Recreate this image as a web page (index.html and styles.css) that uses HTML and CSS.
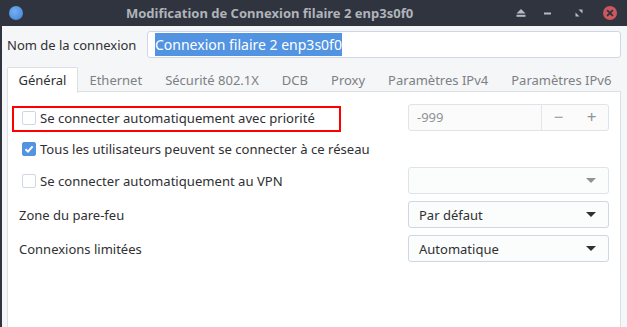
FILE: index.html
```html
<!DOCTYPE html>
<html lang="fr">
<head>
    <meta charset="UTF-8">
    <title>Modification de Connexion filaire 2 enp3s0f0</title>
    <link rel="stylesheet" href="styles.css">
</head>
<body>
    <div class="titlebar">
        <span class="app-icon"></span>
        <div class="title">Modification de Connexion filaire 2 enp3s0f0</div>
        <div class="wm-buttons">
            <svg class="wm-btn" width="10" height="8" viewBox="0 0 10 8"><path d="M5 0 L9.5 4.5 H0.5 Z" fill="#b6bac1"/><rect x="0.5" y="5.8" width="9" height="2" fill="#b6bac1"/></svg>
            <svg class="wm-btn" width="8" height="3" viewBox="0 0 8 3"><rect x="0" y="0.5" width="7" height="2" fill="#b6bac1"/></svg>
            <svg class="wm-btn" width="8" height="8" viewBox="0 0 8 8"><path d="M3.5 0.5 H7.5 V4.5 Z" fill="#b6bac1"/><path d="M0.5 3.5 V7.5 H4.5 Z" fill="#b6bac1"/></svg>
            <svg class="wm-close" width="14" height="14" viewBox="0 0 14 14"><circle cx="7" cy="7" r="7" fill="#cc575d"/><path d="M4.6 4.6 L9.4 9.4 M9.4 4.6 L4.6 9.4" stroke="#2f343f" stroke-width="1.8" stroke-linecap="round"/></svg>
        </div>
    </div>

    <div class="window">
        <div class="name-row">
            <label class="name-label">Nom de la connexion</label>
            <div class="name-input"><span class="selected">Connexion filaire 2 enp3s0f0</span></div>
        </div>

        <div class="tabs">
            <div class="tab active">Général</div>
            <div class="tab">Ethernet</div>
            <div class="tab">Sécurité 802.1X</div>
            <div class="tab">DCB</div>
            <div class="tab">Proxy</div>
            <div class="tab">Paramètres IPv4</div>
            <div class="tab">Paramètres IPv6</div>
        </div>

        <div class="panel">
            <div class="check marked"><span class="box"></span>Se connecter automatiquement avec priorité</div>
            <div class="spin">
                <span class="spin-value">-999</span>
                <span class="spin-btn">&minus;</span>
                <span class="spin-btn">+</span>
            </div>

            <div class="check"><span class="box checked"><svg width="10" height="10" viewBox="0 0 10 10"><path d="M1.5 5.2 L4 7.6 L8.6 2.4" fill="none" stroke="#fff" stroke-width="2"/></svg></span>Tous les utilisateurs peuvent se connecter à ce réseau</div>
            <div></div>

            <div class="check"><span class="box"></span>Se connecter automatiquement au VPN</div>
            <div class="combo disabled"><span></span><span class="arrow"></span></div>

            <div class="label">Zone du pare-feu</div>
            <div class="combo"><span>Par défaut</span><span class="arrow"></span></div>

            <div class="label">Connexions limitées</div>
            <div class="combo"><span>Automatique</span><span class="arrow"></span></div>
        </div>
    </div>
</body>
</html>
```

FILE: styles.css
```css
body {
    margin: 0;
    width: 627px;
    height: 327px;
    overflow: hidden;
    font-family: "Noto Sans", sans-serif;
    font-size: 13px;
    color: #2f3033;
    background-color: #f5f6f7;
}

.titlebar {
    display: flex;
    align-items: center;
    height: 26px;
    background-color: #2f343f;
    padding: 0 10px 0 9px;
}

.app-icon {
    width: 14px;
    height: 14px;
    border-radius: 50%;
    background: radial-gradient(circle at 40% 40%, #78aef0 0, #5294e2 60%, #3f7fd0 100%);
}

.title {
    flex: 1;
    text-align: center;
    font-weight: bold;
    color: #afb3ba;
    font-size: 13px;
    padding-bottom: 1px;
}

.wm-buttons {
    display: flex;
    align-items: center;
}

.wm-btn {
    margin-right: 18px;
}

.wm-btn:nth-child(2) {
    margin-right: 23px;
}

.wm-btn:nth-child(3) {
    margin-right: 20px;
}

/* main window area */
.window {
    height: 301px;
    box-sizing: border-box;
    border-left: 2px solid #2f343f;
    padding: 5px 6px 0 5px;
    display: flex;
    flex-direction: column;
}

.name-row {
    display: flex;
    align-items: center;
    height: 27px;
    flex-shrink: 0;
}

.name-label {
    width: 140px;
}

.name-input {
    flex: 1;
    height: 25px;
    line-height: 25px;
    background-color: #fff;
    border: 1px solid #cfd6e6;
    border-radius: 3px;
    padding-left: 7px;
    font-size: 14px;
}

.selected {
    background-color: #5294e2;
    color: #fff;
    padding: 2px 0;
}

.tabs {
    display: flex;
    margin-top: 9px;
    height: 24px;
    flex-shrink: 0;
    position: relative;
    z-index: 1;
}

.tab {
    padding: 0 10.5px;
    line-height: 24px;
    white-space: nowrap;
    color: #7d8085;
    border: 1px solid transparent;
    border-bottom: none;
}

.tab.active {
    color: #2f3033;
    background-color: #fff;
    border-color: #dcdfe3;
    border-radius: 2px 2px 0 0;
    height: 25px;
}

.panel {
    flex: 1;
    background-color: #fff;
    border: 1px solid #dcdfe3;
    border-bottom: none;
    padding: 12px 11px 0 11px;
    display: grid;
    grid-template-columns: 1fr 201px;
    grid-template-rows: 27px 22px 27px 27px 27px;
    row-gap: 7px;
    align-content: start;
    align-items: center;
}

.check {
    display: flex;
    align-items: center;
    font-size: 13.1px;
}

.box {
    width: 12px;
    height: 12px;
    margin: 0 4px 0 3px;
    border: 1px solid #cfd6e6;
    border-radius: 2px;
    background-color: #fff;
    display: flex;
    align-items: center;
    justify-content: center;
}

.box.checked {
    background-color: #5294e2;
    border-color: #5294e2;
}

/* red annotation frame */
.marked {
    position: relative;
}

.marked::after {
    content: "";
    position: absolute;
    left: -7px;
    top: -3px;
    width: 325px;
    height: 22px;
    border: 2px solid #f00;
}

.spin {
    display: flex;
    height: 25px;
    border: 1px solid #dfe3ea;
    border-radius: 3px;
    background-color: #fbfbfc;
}

.spin-value {
    flex: 1;
    line-height: 25px;
    padding-left: 8px;
    color: #8f9297;
    border-right: 1px solid #e2e5ea;
}

.spin-btn {
    width: 33px;
    text-align: center;
    line-height: 24px;
    font-size: 17px;
    color: #8f9297;
}

.combo {
    display: flex;
    justify-content: space-between;
    align-items: center;
    height: 25px;
    border: 1px solid #cfd6e6;
    border-radius: 3px;
    background-color: #fbfcfc;
    padding: 0 12px 0 10px;
}

.arrow {
    width: 0;
    height: 0;
    border-left: 5px solid transparent;
    border-right: 5px solid transparent;
    border-top: 5px solid #2f3033;
}

.combo.disabled {
    border-color: #dfe3ea;
}

.combo.disabled .arrow {
    border-top-color: #8f9297;
}
```
